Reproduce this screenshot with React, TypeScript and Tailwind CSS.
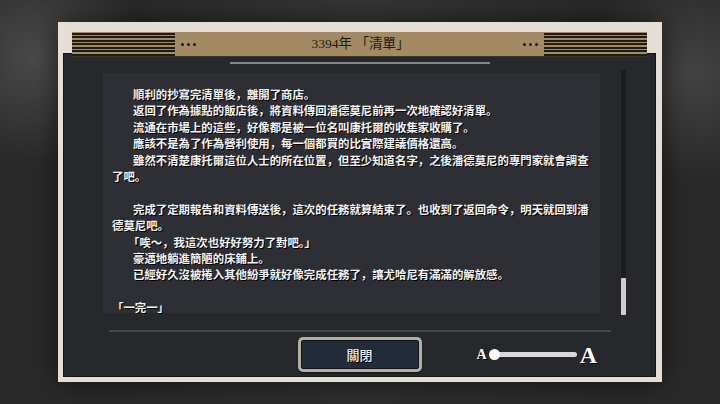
import React from "react";

const lines: { t: string; indent?: boolean; bracket?: boolean }[] = [
  { t: "順利的抄寫完清單後，離開了商店。", indent: true },
  { t: "返回了作為據點的飯店後，將資料傳回潘德莫尼前再一次地確認好清單。", indent: true },
  { t: "流通在市場上的這些，好像都是被一位名叫康托爾的收集家收購了。", indent: true },
  { t: "應該不是為了作為營利使用，每一個都買的比實際建議價格還高。", indent: true },
  { t: "雖然不清楚康托爾這位人士的所在位置，但至少知道名字，之後潘德莫尼的專門家就會調查", indent: true },
  { t: "了吧。" },
  { t: "" },
  { t: "完成了定期報告和資料傳送後，這次的任務就算結束了。也收到了返回命令，明天就回到潘", indent: true },
  { t: "德莫尼吧。" },
  { t: "「唉～，我這次也好好努力了對吧。」", bracket: true },
  { t: "豪邁地躺進簡陋的床鋪上。", indent: true },
  { t: "已經好久沒被捲入其他紛爭就好像完成任務了，讓尤哈尼有滿滿的解放感。", indent: true },
  { t: "" },
  { t: "「一完一」" },
];

function Dots() {
  return (
    <div className="flex gap-[3px]">
      <div className="w-[3px] h-[3px] rounded-full bg-[#1d1b18]" />
      <div className="w-[3px] h-[3px] rounded-full bg-[#1d1b18]" />
      <div className="w-[3px] h-[3px] rounded-full bg-[#1d1b18]" />
    </div>
  );
}

function Stripes() {
  return (
    <div className="w-[103px] h-[25px] py-[1px] flex flex-col justify-between">
      {[0, 1, 2, 3, 4, 5, 6].map((i) => (
        <div key={i} className="h-[2px] bg-[#1d1b18]" />
      ))}
    </div>
  );
}

export default function App() {
  return (
    <div className="w-[720px] h-[404px] overflow-hidden bg-[#292929] bg-[radial-gradient(circle_at_5%_14%,#4a4a4a_0%,transparent_14%),radial-gradient(circle_at_96%_18%,#434343_0%,transparent_14%),radial-gradient(ellipse_at_50%_0%,#353535_0%,transparent_45%),radial-gradient(ellipse_at_50%_100%,#2e2e2e_0%,transparent_50%)] pt-[22px] pl-[58px]">
      <div className="w-[604px] h-[360px] bg-[#e4ded7] flex flex-col shadow-[0_0_24px_rgba(0,0,0,0.55)]">
        {/* header bar */}
        <div className="relative z-10 mt-[10px] ml-[14px] w-[575px] h-[25px] bg-[#a38a63] flex items-center border-b border-[#3b342a]">
          <Stripes />
          <div className="ml-[6px]">
            <Dots />
          </div>
          <div className="flex-1 flex justify-center text-[#1b1a17] text-[13.5px] font-['Liberation_Serif','Noto_Sans_CJK_TC',serif] pl-[2px] whitespace-pre">
            3394年 「清單」
          </div>
          <div className="mr-[6px]">
            <Dots />
          </div>
          <Stripes />
        </div>
        {/* dark panel */}
        <div className="-mt-[4px] ml-[5px] w-[593px] h-[324px] bg-[#27282c] border border-[#141517] flex flex-col">
          <div className="mx-auto mt-[8px] w-[260px] h-[2px] bg-[#85868a]" />
          <div className="mt-[6px] flex items-start pl-[39px]">
            <div className="mt-[3px] w-[497px] h-[240px] bg-[#2e2f34] pt-[13px] pl-[9px] text-[#f4f4f4] text-[11.4px] leading-[16.4px] font-bold font-['Noto_Sans_CJK_SC',sans-serif] [text-shadow:1px_1px_0_#000]">
              {lines.map((l, i) => (
                <div
                  key={i}
                  className={
                    (l.indent ? "pl-[21px] " : l.bracket ? "pl-[16px] " : "") +
                    "whitespace-nowrap h-[16.4px]"
                  }
                >
                  {l.t}
                </div>
              ))}
            </div>
            <div className="ml-[21px] w-[5px] h-[245px] bg-[#1c1d20] flex flex-col justify-end">
              <div className="h-[37px] bg-[#cfcfcf] rounded-[1px]" />
            </div>
          </div>
          <div className="mt-[15px] ml-[45px] w-[502px] h-[2px] bg-[#43464c]" />
          <div className="mt-[5px] h-[35px] grid grid-cols-[1fr_124px_1fr] items-center">
            <div />
            <div className="h-[35px] rounded-[5px] bg-[#b4afa3] p-[3px] shadow-[0_1px_2px_rgba(0,0,0,0.6)]">
              <div className="w-full h-full rounded-[2px] bg-[#232a39] border border-[#10131a] flex items-center justify-center text-[#f2f2f2] text-[13px] font-['Noto_Sans_CJK_TC',sans-serif] font-medium [text-shadow:1px_1px_0_#000]">
                關閉
              </div>
            </div>
            <div className="pl-[55px] flex items-center">
              <span className="text-white text-[14px] font-bold leading-none font-['Liberation_Serif',serif] [text-shadow:1px_1px_0_#000]">
                A
              </span>
              <div className="relative ml-[2px] w-[90px] h-[11px] flex items-center">
                <div className="ml-[5px] w-[83px] h-[5px] rounded-full bg-[#d8d8d8]" />
                <div className="absolute left-0 top-0 w-[11px] h-[11px] rounded-full bg-white" />
              </div>
              <span className="ml-[1px] text-white text-[24px] font-bold leading-none font-['Liberation_Serif',serif] [text-shadow:1px_1px_0_#000]">
                A
              </span>
            </div>
          </div>
        </div>
      </div>
    </div>
  );
}
